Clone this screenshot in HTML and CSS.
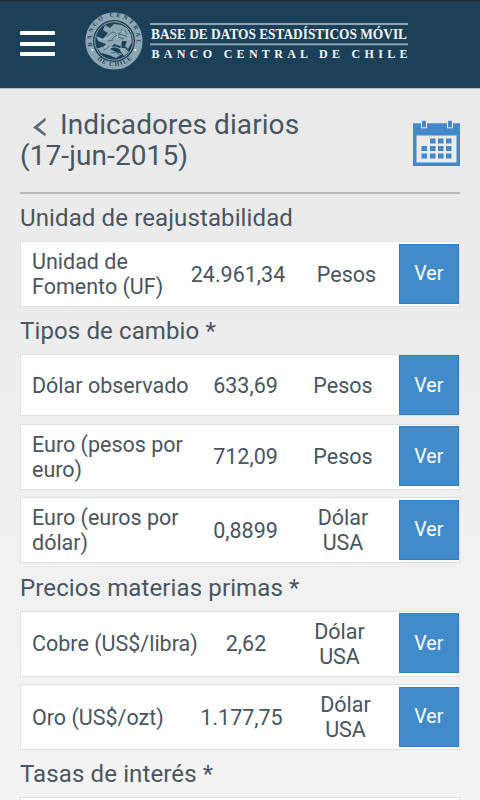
FILE: index.html
```html
<!DOCTYPE html>
<html lang="es">
<head>
    <meta charset="UTF-8">
    <meta name="viewport" content="width=device-width, initial-scale=1.0">
    <title>Base de Datos Estadísticos Móvil</title>
    <link rel="stylesheet" href="styles.css">
</head>
<body>
    <header class="header">
        <button class="menu" aria-label="Menú">
            <span></span>
            <span></span>
            <span></span>
        </button>
        <svg class="logo" width="350" height="60" viewBox="0 0 350 60">
            <defs>
                <path id="ringTop" d="M7.3 34 A22.7 22.7 0 1 1 50.7 34"/>
                <path id="ringBottom" d="M8 43 A25.7 25.7 0 0 0 50 43"/>
            </defs>
            <circle cx="29" cy="29" r="24.8" fill="none" stroke="#8ea5b3" stroke-width="7.6"/>
            <circle cx="29" cy="29" r="19.2" fill="none" stroke="#8ea5b3" stroke-width="1"/>
            <text class="seal"><textPath href="#ringTop" textLength="82">BANCO CENTRAL</textPath></text>
            <text class="seal"><textPath href="#ringBottom" startOffset="6" textLength="38">DE CHILE</textPath></text>
            <circle cx="7.3" cy="38" r="1" fill="#fff"/>
            <circle cx="50.3" cy="38" r="1" fill="#fff"/>
            <!-- condor and huemul -->
            <g fill="#8ea5b3">
                <path d="M11 24 L18 27 L23 21 L18 18 L20 13 L25 16 L29 12 L36 13 L42 16 L46 23 L47 30 L43 37 L40 34 L42 29 L37 29 L35 34 L29 32 L25 37 L31 40 L37 42 L31 46 L24 43 L16 41 L12 36 L18 36 L21 32 L13 29 Z"/>
                <path d="M34 36 L40 36 L44 40 L39 44 L36 40 Z"/>
            </g>
            <g fill="none" stroke="#315a72" stroke-width=".8">
                <path d="M22 25 Q27 18 31 21 T37 17 M27 27 Q32 21 38 23 T44 26 M18 38 Q22 38 24 34 M26 41 Q31 39 35 43 M33 25 L39 27 M23 29 L28 28 M40 18 L42 23"/>
            </g>
            <g fill="none" stroke="#b5c5ce" stroke-width=".8">
                <path d="M14 26 Q21 30 26 23 M30 18 Q34 22 32 27 M36 19 Q43 21 44 28 M20 40 Q26 34 31 35 T40 41 M36 30 L36 36 M15 36 L22 34"/>
            </g>
            <g fill="#8ea5b3">
                <rect x="65" y="11" width="258" height="2"/>
                <rect x="65" y="31.3" width="258" height="2"/>
            </g>
            <text class="brand" x="66" y="27" textLength="256" lengthAdjust="spacingAndGlyphs">BASE DE DATOS ESTADÍSTICOS MÓVIL</text>
            <text class="bank" x="66.5" y="45.5" textLength="256">BANCO CENTRAL DE CHILE</text>
        </svg>
    </header>

    <main class="content">
        <div class="title">
            <h1>
                <svg class="back" width="13" height="20" viewBox="0 0 13 20">
                    <path d="M12.5 .5 L0 10.5 L12.5 19.5 L12.5 16.5 L5 10.3 L12.5 3.8 Z" fill="#5d6a73"/>
                </svg>Indicadores diarios<br>(17-jun-2015)
            </h1>
            <svg class="calendar" width="48" height="47" viewBox="0 0 48 47">
                <rect x="0" y="3.3" width="47" height="42.7" fill="#4488c9"/>
                <rect x="3.5" y="15.5" width="40" height="27" fill="#ebebeb"/>
                <g fill="#4488c9" stroke="#ebebeb" stroke-width="1">
                    <rect x="8.5" y=".2" width="5" height="7.6"/>
                    <rect x="34.5" y=".2" width="5" height="7.6"/>
                </g>
                <g fill="#4488c9">
                    <rect x="17" y="18.5" width="5.5" height="5"/>
                    <rect x="25" y="18.5" width="5.5" height="5"/>
                    <rect x="33" y="18.5" width="5.5" height="5"/>
                    <rect x="8.5" y="26" width="5.5" height="5"/>
                    <rect x="17" y="26" width="5.5" height="5"/>
                    <rect x="25" y="26" width="5.5" height="5"/>
                    <rect x="33" y="26" width="5.5" height="5"/>
                    <rect x="8.5" y="33.5" width="5.5" height="5"/>
                    <rect x="17" y="33.5" width="5.5" height="5"/>
                    <rect x="25" y="33.5" width="5.5" height="5"/>
                    <rect x="33" y="33.5" width="5.5" height="5"/>
                </g>
            </svg>
        </div>

        <h2>Unidad de reajustabilidad</h2>
        <div class="row uf">
            <p class="name">Unidad de Fomento (UF)</p>
            <p class="value">24.961,34</p>
            <p class="unit">Pesos</p>
            <button class="ver">Ver</button>
        </div>

        <h2>Tipos de cambio *</h2>
        <div class="row short">
            <p class="name">Dólar observado</p>
            <p class="value">633,69</p>
            <p class="unit">Pesos</p>
            <button class="ver">Ver</button>
        </div>
        <div class="row">
            <p class="name">Euro (pesos por euro)</p>
            <p class="value">712,09</p>
            <p class="unit">Pesos</p>
            <button class="ver">Ver</button>
        </div>
        <div class="row">
            <p class="name">Euro (euros por dólar)</p>
            <p class="value">0,8899</p>
            <p class="unit">Dólar USA</p>
            <button class="ver">Ver</button>
        </div>

        <h2>Precios materias primas *</h2>
        <div class="row cobre">
            <p class="name">Cobre (US$/libra)</p>
            <p class="value">2,62</p>
            <p class="unit">Dólar USA</p>
            <button class="ver">Ver</button>
        </div>
        <div class="row oro">
            <p class="name">Oro (US$/ozt)</p>
            <p class="value">1.177,75</p>
            <p class="unit">Dólar USA</p>
            <button class="ver">Ver</button>
        </div>

        <h2>Tasas de interés *</h2>
        <div class="row"></div>
    </main>
</body>
</html>
```
FILE: styles.css
```css
* {
    margin: 0;
    padding: 0;
    box-sizing: border-box;
}
body {
    height: 800px;
    overflow: hidden;
    background: linear-gradient(#e9e9e9 88px, #f4f4f4 800px);
    font-family: Roboto, "Liberation Sans", sans-serif;
    color: #495560;
}
.header {
    display: flex;
    align-items: flex-start;
    height: 89px;
    padding: 12px 20px 0;
    background: #1b4058;
    border-top: 1px solid #252525;
    border-bottom: 1px solid #b5bbbf;
}
.menu {
    display: flex;
    flex-direction: column;
    gap: 6.6px;
    width: 35px;
    margin: 18px 30px 0 0;
    border: none;
    background: none;
}
.menu span {
    height: 4px;
    border-radius: 1px;
    background: #fff;
}
.logo {
    margin-top: -1px;
}
.seal {
    font: bold 6px "Liberation Serif", serif;
    fill: #1b4058;
}
.brand {
    font: bold 15px "Liberation Serif", serif;
    fill: #f4f7f8;
}
.bank {
    font: bold 12px "Liberation Serif", serif;
    fill: #f4f7f8;
}
.content {
    padding: 0 20px;
}
.title {
    display: flex;
    justify-content: space-between;
    height: 105px;
    padding-top: 20px;
    border-bottom: 2px solid #bababa;
}
.title h1 {
    font-size: 28px;
    font-weight: 400;
    line-height: 31px;
    letter-spacing: .1px;
}
.back {
    margin: 0 14px 0 13px;
    vertical-align: -3px;
}
.calendar {
    margin: 11px -1px 0 0;
}
h2 {
    height: 47px;
    padding-top: 9px;
    font-size: 24px;
    font-weight: 400;
    line-height: 30px;
    letter-spacing: .12px;
}
.row {
    display: grid;
    grid-template-columns: 182px 85px 110px 61px;
    align-items: center;
    height: 66px;
    margin-bottom: 7.5px;
    border: 1px solid #e0e0e0;
    background: #fff;
    font-size: 21.5px;
    line-height: 25px;
}
.row:has(+ h2) {
    margin-bottom: .3px;
}
.short {
    height: 62px;
}
.uf {
    grid-template-columns: 160px 114px 103px 61px;
}
.cobre {
    grid-template-columns: 190px 70px 117px 61px;
}
.oro {
    grid-template-columns: 169px 103px 105px 61px;
}
.name {
    padding-left: 11px;
}
.value, .unit {
    text-align: center;
}
.unit {
    padding: 0 12px;
}
.ver {
    align-self: start;
    height: 60px;
    margin: 1.5px 0 0 .6px;
    border: 1px solid #357ebd;
    background: #428bca;
    color: #fff;
    font-family: inherit;
    font-size: 19.5px;
}
.short .ver {
    margin-top: 0;
}
```
